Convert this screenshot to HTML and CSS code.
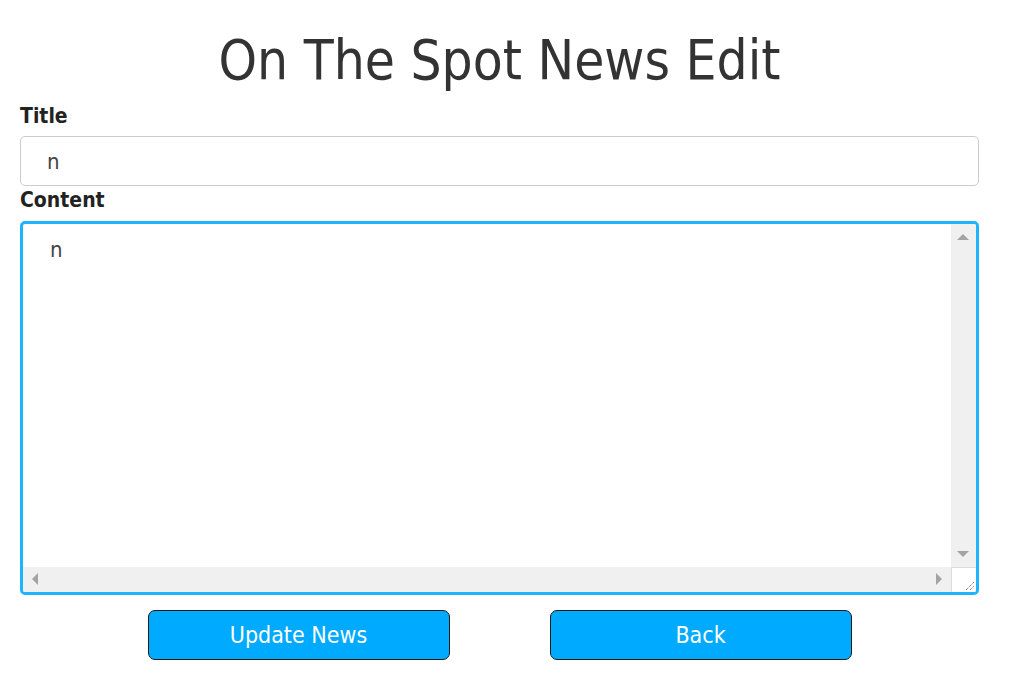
FILE: index.html
```html
<!DOCTYPE html>
<html lang="en">
<head>
<meta charset="utf-8">
<title>On The Spot News Edit</title>
<link rel="stylesheet" href="styles.css">
</head>
<body>
<main class="page">
  <h1 class="heading">On The Spot News Edit</h1>
  <form class="form">
    <label class="label" for="title">Title</label>
    <input class="input" id="title" type="text" value="n">
    <label class="label label-content" for="content">Content</label>
    <div class="textarea-box">
      <div class="textarea-text" id="content">n</div>
      <div class="vscroll">
        <span class="arrow arrow-up"></span>
        <span class="arrow arrow-down"></span>
      </div>
      <div class="hscroll">
        <span class="arrow arrow-left"></span>
        <span class="arrow arrow-right"></span>
      </div>
      <div class="corner">
        <svg class="grip" width="10" height="10" viewBox="0 0 10 10">
          <path d="M1 9 L9 1 M5 9 L9 5" stroke="#555" stroke-width="1" stroke-dasharray="1 1" fill="none"/>
        </svg>
      </div>
    </div>
    <div class="actions">
      <button class="btn" type="button">Update News</button>
      <button class="btn" type="button">Back</button>
    </div>
  </form>
</main>
</body>
</html>
```

FILE: styles.css
```css
html, body {
  margin: 0;
  padding: 0;
  background: #ffffff;
}

body {
  font-family: "DejaVu Sans Condensed", "DejaVu Sans", sans-serif;
  font-stretch: condensed;
  color: #333333;
}

.page {
  width: 959px;
  margin-left: 20px;
  padding-top: 28px;
}

.heading {
  margin: 0;
  font-size: 54.5px;
  font-weight: normal;
  line-height: 64px;
  text-align: center;
  color: #333333;
}

.form {
  display: flex;
  flex-direction: column;
}

.label {
  display: block;
  font-size: 21px;
  font-weight: bold;
  line-height: 24px;
  margin-top: 12px;
  color: #222222;
}

.label-content {
  margin-top: 2px;
}

.input {
  box-sizing: border-box;
  height: 50px;
  margin-top: 8px;
  width: 100%;
  border: 1px solid #cccccc;
  border-radius: 5px;
  padding: 0 26px;
  font-family: inherit;
  font-stretch: condensed;
  font-size: 22px;
  color: #444444;
  background: #ffffff;
  outline: none;
}

.textarea-box {
  box-sizing: border-box;
  margin-top: 9px;
  height: 374px;
  border: 3px solid #1eb4ff;
  border-radius: 5px;
  display: grid;
  grid-template-columns: 1fr 25px;
  grid-template-rows: 1fr 25px;
  overflow: hidden;
}

.textarea-text {
  padding: 12px 27px;
  font-size: 22px;
  line-height: 28px;
  color: #444444;
}

.vscroll {
  background: #f0f0f0;
  position: relative;
}

.hscroll {
  background: #f0f0f0;
  position: relative;
}

.corner {
  background: #ffffff;
  border-left: 1px solid #dcdcdc;
  border-top: 1px solid #dcdcdc;
  position: relative;
}

.grip {
  position: absolute;
  right: 1px;
  bottom: 1px;
}

.arrow {
  position: absolute;
  width: 0;
  height: 0;
}

.arrow-up {
  top: 10px;
  left: 6px;
  border-left: 6px solid transparent;
  border-right: 6px solid transparent;
  border-bottom: 6px solid #a3a3a3;
}

.arrow-down {
  bottom: 10px;
  left: 6px;
  border-left: 6px solid transparent;
  border-right: 6px solid transparent;
  border-top: 6px solid #a3a3a3;
}

.arrow-left {
  left: 9px;
  top: 6px;
  border-top: 6px solid transparent;
  border-bottom: 6px solid transparent;
  border-right: 6px solid #a3a3a3;
}

.arrow-right {
  right: 9px;
  top: 6px;
  border-top: 6px solid transparent;
  border-bottom: 6px solid transparent;
  border-left: 6px solid #a3a3a3;
}

.actions {
  display: flex;
  justify-content: center;
  gap: 100px;
  margin-top: 15px;
}

.btn {
  box-sizing: border-box;
  width: 302px;
  height: 50px;
  background: #00aaff;
  border: 1px solid #1a1a1a;
  border-radius: 7px;
  color: #ffffff;
  font-family: inherit;
  font-stretch: condensed;
  font-size: 23px;
  padding: 0;
  cursor: pointer;
}
```
